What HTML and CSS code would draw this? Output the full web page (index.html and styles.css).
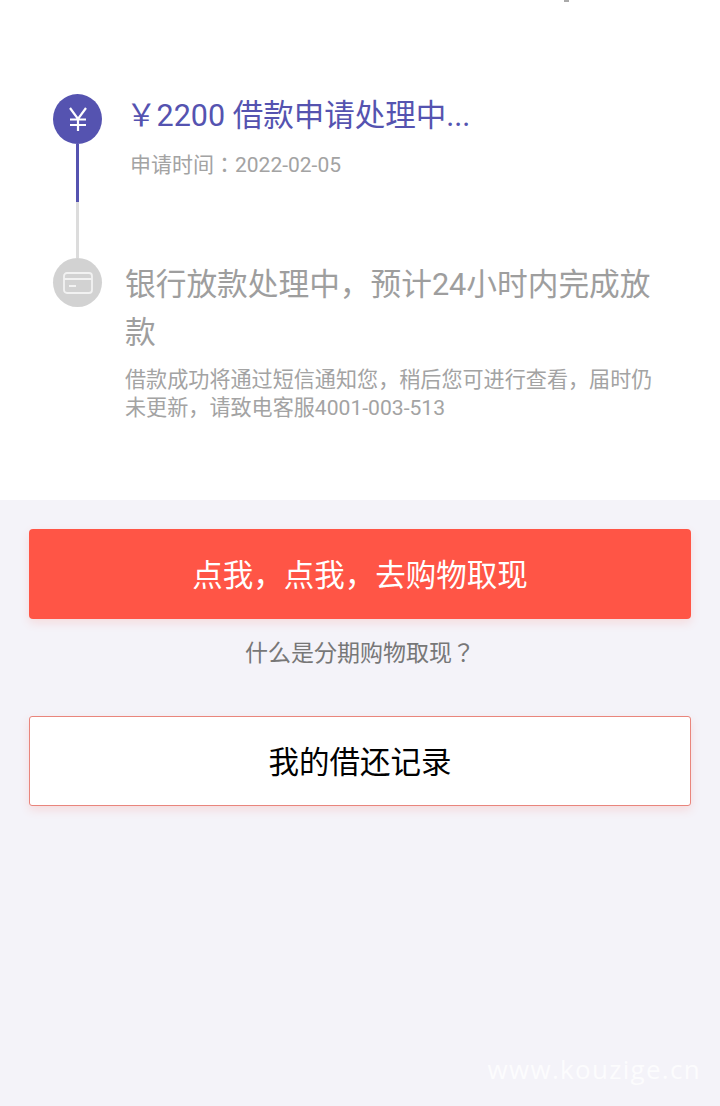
FILE: index.html
```html
<!DOCTYPE html>
<html lang="en">
<head>
    <meta charset="UTF-8">
    <meta name="viewport" content="width=device-width, initial-scale=1.0">
    <title>借款进度</title>
    <link rel="stylesheet" href="styles.css">
</head>
<body>
    <div class="page">
        <div class="top-mark"></div>
        <div class="progress">
            <div class="step step-active">
                <div class="rail">
                    <div class="dot dot-active">
                        <svg width="20" height="24" viewBox="0 0 20 24" fill="none" stroke="#fff" stroke-width="2.2">
                            <path d="M2 1 10 12 18 1M10 12V24M2 12.500H18M2 18H18"/>
                        </svg>
                    </div>
                    <div class="line line-active"></div>
                    <div class="line line-pending"></div>
                </div>
                <div class="step-text step-text-active">
                    <div class="step-title step-title-active">￥2200 借款申请处理中...</div>
                    <div class="step-note">申请时间：2022-02-05</div>
                </div>
            </div>
            <div class="step">
                <div class="rail">
                    <div class="dot dot-pending">
                        <svg width="30" height="22" viewBox="0 0 30 22" fill="none" stroke="#f2f2f2" stroke-width="1.800">
                            <rect x="1" y="1" width="28" height="20" rx="3"/>
                            <path d="M1 7H29M6 14H13"/>
                        </svg>
                    </div>
                </div>
                <div class="step-text">
                    <div class="step-title step-title-pending">银行放款处理中，预计24小时内完成放款</div>
                    <div class="step-desc">借款成功将通过短信通知您，稍后您可进行查看，届时仍未更新，请致电客服4001-003-513</div>
                </div>
            </div>
        </div>
        <div class="actions">
            <button class="btn btn-primary">点我，点我，去购物取现</button>
            <div class="help-link">什么是分期购物取现？</div>
            <button class="btn btn-outline">我的借还记录</button>
        </div>
        <div class="watermark">www.kouzige.cn</div>
    </div>
</body>
</html>
```

FILE: styles.css
```css
* {
    box-sizing: border-box;
}

html, body {
    margin: 0;
    height: 100%;
}

body {
    font-family: Roboto, "Noto Sans CJK SC", sans-serif;
    background-color: #f4f3f9;
}

.page {
    position: relative;
    height: 1106px;
    overflow: hidden;
}

.top-mark {
    position: absolute;
    top: 0;
    left: 564px;
    width: 5px;
    height: 2px;
    background-color: #aaa;
}

.progress {
    height: 500px;
    padding: 94px 64px 0 53px;
    background-color: #fff;
}

.step {
    display: flex;
}

.step-active {
    height: 164px;
}

.rail {
    display: flex;
    flex-direction: column;
    align-items: center;
    flex-shrink: 0;
    width: 49px;
}

.dot {
    display: flex;
    align-items: center;
    justify-content: center;
    flex-shrink: 0;
    width: 49px;
    height: 49px;
    border-radius: 50%;
}

.dot-active {
    height: 50px;
    background-color: #5553b0;
}

.dot-pending {
    background-color: #d2d2d2;
}

.line {
    width: 3px;
}

.line-active {
    height: 58px;
    background-color: #5553b0;
}

.line-pending {
    height: 56px;
    background-color: #dcdcdc;
}

.step-text {
    margin-left: 23px;
    padding-top: 3px;
}

.step-text-active {
    margin-left: 28px;
    padding-top: 0;
}

.step-title {
    font-size: 30.5px;
    line-height: 44px;
    white-space: nowrap;
}

.step-title-active {
    margin-left: -4px;
    color: #5553b0;
}

.step-title-pending {
    font-size: 30.7px;
    line-height: 48px;
    color: #9e9e9e;
    white-space: normal;
}

.step-note {
    margin-top: 13px;
    font-family: Roboto, "Noto Sans CJK JP", sans-serif;
    font-size: 21px;
    line-height: 28px;
    color: #a3a3a3;
}

.step-desc {
    margin-top: 9px;
    font-size: 21.1px;
    line-height: 28px;
    color: #a3a3a3;
}

.actions {
    display: flex;
    flex-direction: column;
    padding: 29px 29px 0;
}

.btn {
    display: block;
    width: 100%;
    height: 90px;
    padding: 0 0 3px;
    font-family: inherit;
    font-size: 30.5px;
    border-radius: 4px;
    cursor: pointer;
}

.btn-primary {
    border: none;
    color: #fff;
    background-color: #ff5546;
    box-shadow: 0 4px 10px rgba(255, 85, 70, 0.15);
}

.btn-outline {
    border: 1px solid #e9857c;
    border-radius: 3px;
    color: #000;
    background-color: #fff;
    box-shadow: 0 4px 10px rgba(255, 85, 70, 0.15);
}

.help-link {
    margin: 17px 0 44px;
    font-family: Roboto, "Noto Sans CJK JP", sans-serif;
    font-size: 23px;
    line-height: 36px;
    text-align: center;
    color: #777;
}

.watermark {
    position: absolute;
    right: 19px;
    bottom: 19px;
    font-family: "Open Sans", sans-serif;
    font-size: 26px;
    letter-spacing: 1.3px;
    color: rgba(255, 255, 255, 0.75);
}
```
